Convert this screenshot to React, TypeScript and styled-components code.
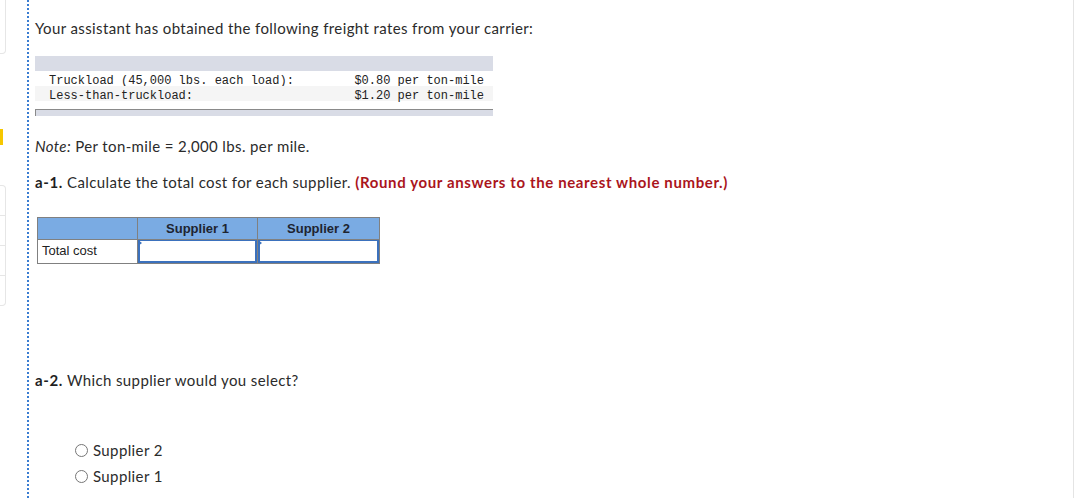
import React from "react";
import styled, { createGlobalStyle } from "styled-components";

const Global = createGlobalStyle`
  html, body { margin: 0; padding: 0; background: #fff; }
  body { font-family: "Lato", "Liberation Sans", sans-serif; color: #2b2b2b; }
`;

const Page = styled.div`
  display: flex;
  width: 1074px;
  height: 498px;
  box-sizing: border-box;
  border-right: 1px solid #e4e4e4;
  overflow: hidden;
`;

const Sidebar = styled.div`
  width: 27px;
  flex: none;
  display: flex;
  flex-direction: column;
`;

const TopCard = styled.div`
  width: 5px;
  height: 62px;
  margin-top: -10px;
  border: 1px solid #e6e6e6;
  border-left: none;
  border-radius: 0 0 4px 0;
`;

const Marker = styled.div`
  width: 3px;
  height: 16px;
  margin-top: 75px;
  background: #f6c700;
`;

const StackCard = styled.div`
  width: 5px;
  margin-top: 40px;
  border: 1px solid #e6e6e6;
  border-left: none;
  border-radius: 0 4px 4px 0;
  display: flex;
  flex-direction: column;
`;

const StackItem = styled.div<{ $last?: boolean }>`
  height: 29px;
  border-bottom: ${(p) => (p.$last ? "none" : "1px solid #e6e6e6")};
`;

const Dots = styled.div`
  width: 2px;
  flex: none;
  background: repeating-linear-gradient(to bottom, #3a7dd2 0 2px, transparent 2px 4px);
`;

const Main = styled.div`
  flex: 1;
  padding-left: 6px;
  display: flex;
  flex-direction: column;
`;

const Para = styled.p<{ $mt: number }>`
  margin: ${(p) => p.$mt}px 0 0 0;
  font-size: 15px;
  line-height: 20px;
  letter-spacing: 0.38px;
  color: #2b2b2b;
  white-space: nowrap;
`;

const Bold = styled.b`
  font-weight: 700;
  color: #1f1f1f;
  letter-spacing: 0.6px;
`;

const Red = styled.b`
  font-weight: 700;
  color: #aa151c;
  letter-spacing: 0.62px;
`;

const RateBox = styled.div`
  margin-top: 18px;
  width: 458px;
  display: flex;
  flex-direction: column;
  font-family: "Liberation Mono", "DejaVu Sans Mono", monospace;
  font-size: 12px;
  color: #222;
`;

const RateBand = styled.div`
  height: 15px;
  background: #d9dce6;
`;

const RateRow = styled.div<{ $alt?: boolean }>`
  height: 15px;
  line-height: 21px;
  display: flex;
  justify-content: space-between;
  padding: 0 9px 0 14px;
  background: ${(p) => (p.$alt ? "#f5f5f5" : "#fff")};
  white-space: pre;
`;

const RateFoot = styled.div`
  margin-top: 8px;
  height: 6px;
  background: #d9dce6;
  border-top: 1px solid #8a8a8a;
  border-left: 1px solid #8a8a8a;
`;

const Grid = styled.div`
  margin-top: 25px;
  margin-left: 2px;
  display: grid;
  grid-template-columns: 101px 120px 122px;
  width: 343px;
  font-family: "Liberation Sans", Arial, sans-serif;
  font-size: 13px;
  color: #222;
`;

const HeadCell = styled.div<{ $first?: boolean }>`
  height: 23px;
  line-height: 22px;
  box-sizing: border-box;
  background: #7aabe3;
  border: 1px solid #808080;
  border-left-width: ${(p) => (p.$first ? "1px" : "0")};
  text-align: center;
  font-weight: 700;
  color: #1e2430;
`;

const LabelCell = styled.div`
  height: 24px;
  line-height: 22px;
  box-sizing: border-box;
  border: 1px solid #808080;
  border-top: none;
  padding-left: 4px;
`;

const InputCell = styled.div`
  height: 24px;
  box-sizing: border-box;
  border-bottom: 1px solid #808080;
  border-right: 1px solid #808080;
  position: relative;
  background: #fff;
`;

const InputBox = styled.div`
  position: absolute;
  inset: 0;
  border: 2px solid #3b71bd;
  border-top-width: 1px;
  box-sizing: border-box;
`;

const Tri = styled.span`
  position: absolute;
  left: 0;
  top: 0;
  width: 0;
  height: 0;
  border-top: 3px solid transparent;
  border-bottom: 3px solid transparent;
  border-left: 4px solid #3b71bd;
`;

const Options = styled.div`
  margin-top: 50px;
  margin-left: 40px;
  display: flex;
  flex-direction: column;
  gap: 6px;
`;

const Option = styled.label`
  display: flex;
  align-items: center;
  gap: 5px;
  font-size: 15px;
  line-height: 20px;
  letter-spacing: 0.38px;
  color: #2b2b2b;
`;

const Radio = styled.span`
  width: 13px;
  height: 13px;
  border-radius: 50%;
  border: 1px solid #767676;
  box-sizing: border-box;
  background: #fff;
`;

export default function App() {
  return (
    <>
      <Global />
      <Page>
        <Sidebar>
          <TopCard />
          <Marker />
          <StackCard>
            <StackItem />
            <StackItem />
            <StackItem />
            <StackItem $last />
          </StackCard>
        </Sidebar>
        <Dots />
        <Main>
          <Para $mt={18}>Your assistant has obtained the following freight rates from your carrier:</Para>
          <RateBox>
            <RateBand />
            <RateRow>
              <span>Truckload (45,000 lbs. each load):</span>
              <span>$0.80 per ton-mile</span>
            </RateRow>
            <RateRow $alt>
              <span>Less-than-truckload:</span>
              <span>$1.20 per ton-mile</span>
            </RateRow>
            <RateFoot />
          </RateBox>
          <Para $mt={20}>
            <i>Note:</i> Per ton-mile = 2,000 lbs. per mile.
          </Para>
          <Para $mt={16}>
            <Bold>a-1.</Bold> Calculate the total cost for each supplier.{" "}
            <Red>(Round your answers to the nearest whole number.)</Red>
          </Para>
          <Grid>
            <HeadCell $first />
            <HeadCell>Supplier 1</HeadCell>
            <HeadCell>Supplier 2</HeadCell>
            <LabelCell>Total cost</LabelCell>
            <InputCell>
              <InputBox />
              <Tri />
            </InputCell>
            <InputCell>
              <InputBox />
              <Tri />
            </InputCell>
          </Grid>
          <Para $mt={106}>
            <Bold>a-2.</Bold> Which supplier would you select?
          </Para>
          <Options>
            <Option>
              <Radio />
              Supplier 2
            </Option>
            <Option>
              <Radio />
              Supplier 1
            </Option>
          </Options>
        </Main>
      </Page>
    </>
  );
}
